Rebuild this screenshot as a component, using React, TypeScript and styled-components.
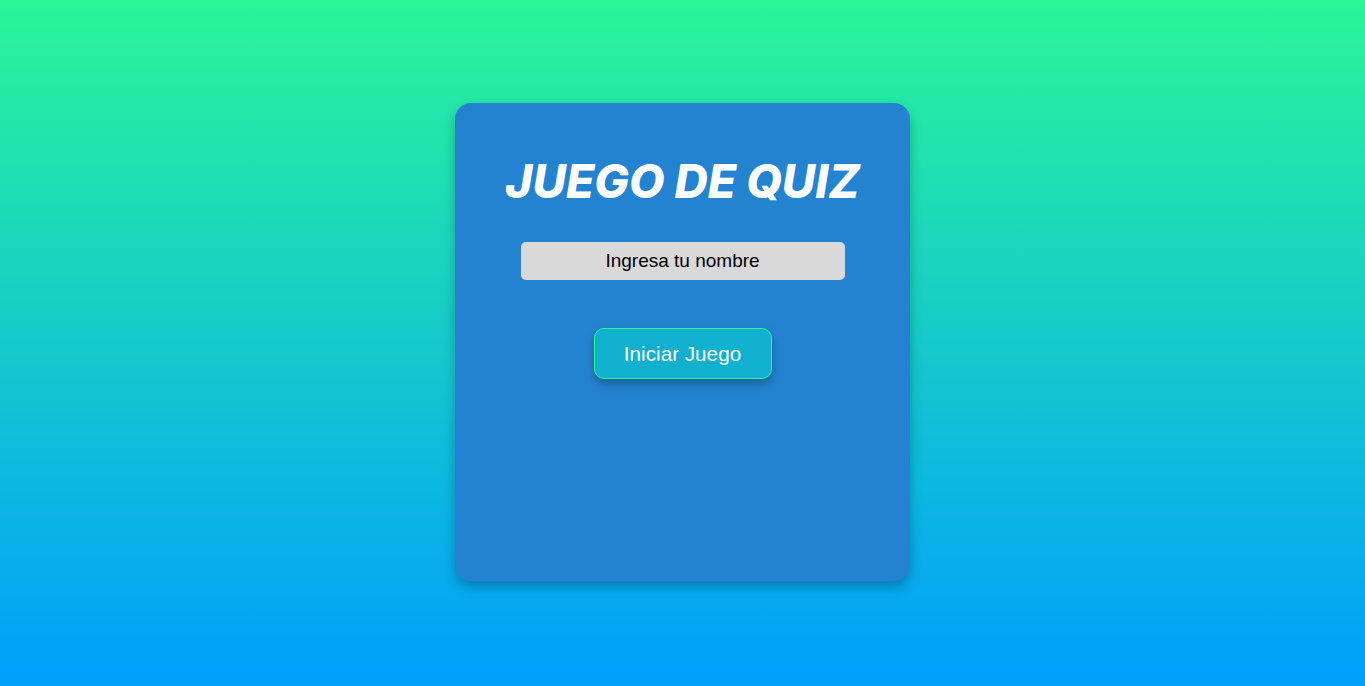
import React, { useState } from "react";
import styled, { createGlobalStyle } from "styled-components";

const GlobalStyle = createGlobalStyle`
  html, body {
    margin: 0;
    padding: 0;
    height: 100%;
  }
  body {
    font-family: "Liberation Sans", Arial, sans-serif;
    background-image: linear-gradient(to top, #009efd 0%, #2af598 100%);
    background-attachment: fixed;
  }
`;

export default function App() {
  const [name, setName] = useState("");

  return (
    <>
      <GlobalStyle />
      <Page>
        <Card>
          <Title>JUEGO DE QUIZ</Title>
          <NameInput
            type="text"
            placeholder="Ingresa tu nombre"
            value={name}
            onChange={(e) => setName(e.target.value)}
          />
          <StartButton type="button">Iniciar Juego</StartButton>
        </Card>
      </Page>
    </>
  );
}

const Page = styled.div`
  min-height: 686px;
  display: flex;
  justify-content: center;
  align-items: flex-start;
  padding-top: 103px;
  box-sizing: border-box;
`;

const Card = styled.div`
  width: 455px;
  height: 478px;
  box-sizing: border-box;
  background: #2483d0;
  border-radius: 16px;
  box-shadow: 0 6px 12px rgba(0, 0, 0, 0.25);
  display: flex;
  flex-direction: column;
  align-items: center;
  padding-top: 52px;
`;

const Title = styled.h1`
  margin: 0;
  font-family: Inter, "Liberation Sans", sans-serif;
  font-size: 46px;
  font-weight: 800;
  font-style: italic;
  color: #ffffff;
  line-height: 52px;
`;

const NameInput = styled.input`
  margin-top: 35px;
  width: 324px;
  height: 38px;
  box-sizing: border-box;
  border: none;
  border-radius: 5px;
  background: #d9d9d9;
  font-family: "Liberation Sans", Arial, sans-serif;
  font-size: 19px;
  text-align: center;
  color: #000;
  outline: none;

  &::placeholder {
    color: #000;
  }
`;

const StartButton = styled.button`
  margin-top: 48px;
  width: 178px;
  height: 51px;
  box-sizing: border-box;
  background: #10b1cf;
  border: 1px solid #2af598;
  border-radius: 10px;
  color: #ffffff;
  font-family: "Liberation Sans", Arial, sans-serif;
  font-size: 20.7px;
  padding-top: 2px;
  cursor: pointer;
  box-shadow: 0 5px 10px rgba(0, 0, 0, 0.25);
`;
